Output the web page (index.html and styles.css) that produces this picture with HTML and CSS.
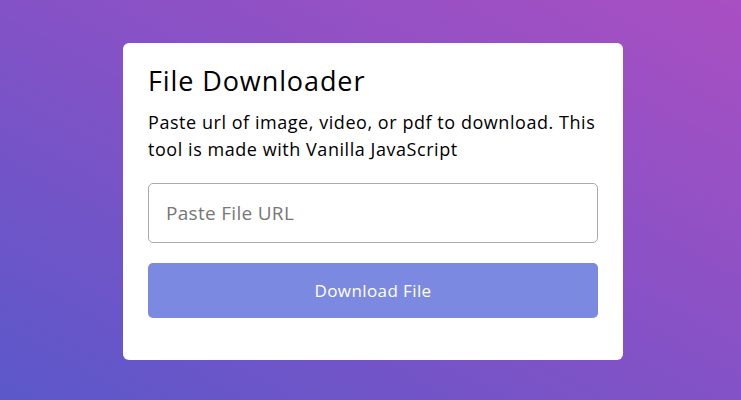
FILE: index.html
```html
<!DOCTYPE html>
<html lang="en">
<head>
<meta charset="utf-8">
<title>File Downloader</title>
<link rel="stylesheet" href="styles.css">
</head>
<body>
<div class="wrapper">
  <header class="head">
    <h1 class="title">File Downloader</h1>
    <p class="desc">Paste url of image, video, or pdf to download. This tool is made with Vanilla JavaScript</p>
  </header>
  <form class="form">
    <input class="url" type="url" placeholder="Paste File URL">
    <button class="btn" type="button">Download File</button>
  </form>
</div>
</body>
</html>
```
FILE: styles.css
```css
* { margin: 0; padding: 0; box-sizing: border-box; }
html, body { height: 100%; }
body {
  font-family: "Open Sans", "Noto Sans", sans-serif;
  background: linear-gradient(to top right, #5b58ca 0%, #8352c6 50%, #a94fc2 100%);
  display: flex;
  align-items: center;
  justify-content: center;
  padding: 3px 0 0 5px;
}
.wrapper {
  width: 500px;
  background: #fff;
  border-radius: 6px;
  padding: 20px 25px 42px;
}
.title {
  font-size: 27px;
  font-weight: 500;
  letter-spacing: 0.9px;
  color: #000;
  line-height: 36px;
}
.desc {
  margin-top: 10px;
  font-size: 18px;
  letter-spacing: 0.55px;
  line-height: 27px;
  color: #000;
}
.form {
  display: flex;
  flex-direction: column;
  gap: 20px;
  margin-top: 20px;
}
.url {
  height: 60px;
  width: 100%;
  border: 1px solid #aaa;
  border-radius: 5px;
  padding: 0 17px;
  font-family: inherit;
  font-size: 19px;
  letter-spacing: 0.3px;
  outline: none;
}
.url::placeholder { color: #777; }
.btn {
  height: 55px;
  width: 100%;
  border: none;
  border-radius: 5px;
  background: #7b8ae0;
  color: #fff;
  font-family: inherit;
  font-size: 17px;
  letter-spacing: 0.4px;
}
```
